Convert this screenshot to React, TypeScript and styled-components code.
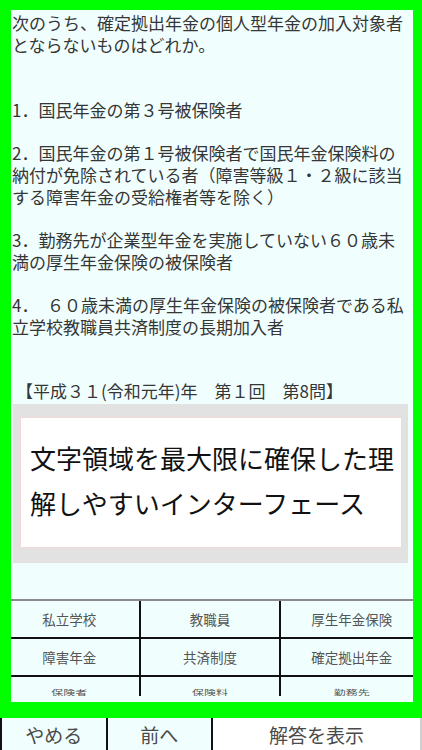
import React, { FC } from 'react';
import styled, { createGlobalStyle } from 'styled-components';

const GlobalStyle = createGlobalStyle`
  html, body {
    margin: 0;
    padding: 0;
    background: #ffffff;
  }
  body {
    font-family: "Noto Sans CJK JP", "Noto Sans", sans-serif;
  }
`;

// lines are split the way the reference wraps them
const paragraphs = [
  { gap: 0, lines: ['次のうち、確定拠出年金の個人型年金の加入対象者', 'とならないものはどれか。'] },
  { gap: 2, lines: ['1．国民年金の第３号被保険者'] },
  {
    gap: 1,
    lines: [
      '2．国民年金の第１号被保険者で国民年金保険料の',
      '納付が免除されている者（障害等級１・２級に該当',
      'する障害年金の受給権者等を除く）',
    ],
  },
  { gap: 1, lines: ['3．勤務先が企業型年金を実施していない６０歳未', '満の厚生年金保険の被保険者'] },
  { gap: 1, lines: ['4．　６０歳未満の厚生年金保険の被保険者である私', '立学校教職員共済制度の長期加入者'] },
];

const keywords = [
  ['私立学校', '教職員', '厚生年金保険'],
  ['障害年金', '共済制度', '確定拠出年金'],
  ['保険者', '保険料', '勤務先'],
];

const actions = [
  { label: 'やめる', grow: 1, light: true },
  { label: '前へ', grow: 1, light: true },
  { label: '解答を表示', grow: 2, light: false },
];

const App: FC = () => (
  <>
    <GlobalStyle />
    <Screen>
      <Stage>
        <Question>
          {paragraphs.map((p) => (
            <Para key={p.lines[0]} $gap={p.gap}>
              {p.lines.map((line) => (
                <Line key={line}>{line}</Line>
              ))}
            </Para>
          ))}
          <Source $gap={2}>
            <Line>【平成３１(令和元年)年　第１回　第8問】</Line>
          </Source>
        </Question>

        <KeywordGrid>
          {keywords.map((row, i) => (
            <KeywordRow key={i} $last={i === keywords.length - 1}>
              {row.map((word) => (
                <KeywordCell key={word}>
                  <KeywordText $squashed={i === keywords.length - 1}>{word}</KeywordText>
                </KeywordCell>
              ))}
            </KeywordRow>
          ))}
        </KeywordGrid>

        <Toast>
          <ToastBody>文字領域を最大限に確保した理解しやすいインターフェース</ToastBody>
        </Toast>

        <Frame />
      </Stage>

      <ActionBar>
        {actions.map((a) => (
          <ActionButton key={a.label} $grow={a.grow} $light={a.light}>
            {a.label}
          </ActionButton>
        ))}
      </ActionBar>
    </Screen>
  </>
);

const Screen = styled.div`
  width: 422px;
  height: 750px;
  display: flex;
  flex-direction: column;
  overflow: hidden;
`;

const Stage = styled.div`
  position: relative;
  height: 718px;
  display: flex;
  flex-direction: column;
  background: #f0fffe;
  overflow: hidden;
`;

const Frame = styled.div`
  position: absolute;
  inset: 0;
  border-style: solid;
  border-color: #00ff00;
  border-width: 10px 9px 16px 11px;
  pointer-events: none;
  z-index: 3;
`;

const Question = styled.div`
  flex: 1;
  padding: 12px 0 0 12px;
  font-size: 17px;
  line-height: 21.7px;
  color: #363636;
`;

const Para = styled.div<{ $gap: number }>`
  margin-top: ${({ $gap }) => $gap * 21.7}px;
`;

const Line = styled.div`
  white-space: nowrap;
`;

const Source = styled(Para)`
  padding-left: 4px;
  margin-top: ${({ $gap }) => $gap * 21.7 - 1}px;
`;

const KeywordGrid = styled.div`
  margin-bottom: 22px;
  border-top: 2px solid #8a8a8a;
`;

const KeywordRow = styled.div<{ $last: boolean }>`
  display: grid;
  grid-template-columns: repeat(3, 1fr);
  height: ${({ $last }) => ($last ? '19px' : '36px')};
  border-bottom: ${({ $last }) => ($last ? 'none' : '2px solid #111')};
`;

const KeywordCell = styled.div`
  display: flex;
  align-items: center;
  justify-content: center;
  border-right: 2px solid #111;
  overflow: hidden;

  &:last-child {
    border-right: none;
  }
`;

const KeywordText = styled.span<{ $squashed: boolean }>`
  font-size: ${({ $squashed }) => ($squashed ? '12px' : '13.5px')};
  color: #555;
  transform: ${({ $squashed }) => ($squashed ? 'translateY(5px) scaleY(0.55)' : 'none')};
`;

const Toast = styled.div`
  position: absolute;
  top: 404px;
  left: 13px;
  width: 395px;
  height: 159px;
  box-sizing: border-box;
  padding: 13px 6px 15px 7px;
  background: #e2e2e2;
  z-index: 2;
`;

const ToastBody = styled.div`
  height: 100%;
  box-sizing: border-box;
  padding: 17px 4px 0 9px;
  background: #ffffff;
  border: 1px solid #f2d9d9;
  font-size: 26px;
  line-height: 45px;
  color: #111;
`;

const ActionBar = styled.div`
  display: flex;
  height: 32px;
  background: #ffffff;
  border-right: 2px solid #cfcfcf;
`;

const ActionButton = styled.div<{ $grow: number; $light: boolean }>`
  flex: ${({ $grow }) => $grow} 1 0;
  display: flex;
  align-items: center;
  justify-content: center;
  border-left: 2px solid #111;
  background: ${({ $light }) => ($light ? '#f0fffe' : '#ffffff')};
  font-size: 19px;
  color: #4a4a4a;
`;

export default App;
